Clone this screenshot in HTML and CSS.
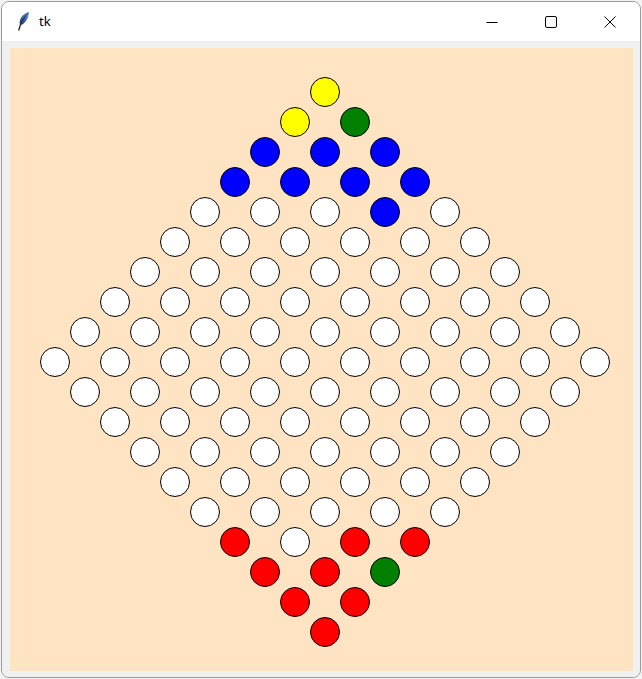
FILE: index.html
```html
<!DOCTYPE html>
<html>
<head>
<meta charset="utf-8">
<title>tk</title>
<link rel="stylesheet" href="styles.css">
</head>
<body>
<div class="window">
  <div class="titlebar">
    <div class="title">
      <svg class="feather" width="13" height="20" viewBox="0 0 13 20">
        <defs>
          <linearGradient id="fg" x1="0" y1="1" x2="1" y2="0">
            <stop offset="0" stop-color="#1d3560"/>
            <stop offset="0.6" stop-color="#3f6fb0"/>
            <stop offset="1" stop-color="#8fb2e0"/>
          </linearGradient>
        </defs>
        <path d="M1.6 19.5 L3.6 13.5" stroke="#222" stroke-width="1.3" fill="none"/>
        <path d="M3.2 14.5 C1.4 10 4 3.5 11.8 0.8 C12.4 6 8.8 12.5 3.2 14.5 Z" fill="url(#fg)"/>
        <path d="M3.6 13.6 C5.4 9.5 8.2 5 11.2 1.8" stroke="#14233f" stroke-width="0.8" fill="none"/>
      </svg>
      <span class="title-text">tk</span>
    </div>
    <div class="controls">
      <div class="ctl"><svg width="12" height="12" viewBox="0 0 12 12"><path d="M0.5 6.5 H11.5" stroke="#000" stroke-width="1"/></svg></div>
      <div class="ctl"><svg width="12" height="12" viewBox="0 0 12 12"><rect x="0.5" y="0.5" width="11" height="11" rx="1.5" fill="none" stroke="#000" stroke-width="1"/></svg></div>
      <div class="ctl"><svg width="12" height="12" viewBox="0 0 12 12"><path d="M0.5 0.5 L11.5 11.5 M11.5 0.5 L0.5 11.5" stroke="#000" stroke-width="1"/></svg></div>
    </div>
  </div>
  <div class="client">
    <div class="canvas">
      <svg class="board" width="623" height="623" viewBox="10 48 623 623">
        <g class="row"><circle class="y" cx="325" cy="92" r="14.5"/></g>
        <g class="row"><circle class="y" cx="295" cy="122" r="14.5"/><circle class="g" cx="355" cy="122" r="14.5"/></g>
        <g class="row"><circle class="b" cx="265" cy="152" r="14.5"/><circle class="b" cx="325" cy="152" r="14.5"/><circle class="b" cx="385" cy="152" r="14.5"/></g>
        <g class="row"><circle class="b" cx="235" cy="182" r="14.5"/><circle class="b" cx="295" cy="182" r="14.5"/><circle class="b" cx="355" cy="182" r="14.5"/><circle class="b" cx="415" cy="182" r="14.5"/></g>
        <g class="row"><circle class="w" cx="205" cy="212" r="14.5"/><circle class="w" cx="265" cy="212" r="14.5"/><circle class="w" cx="325" cy="212" r="14.5"/><circle class="b" cx="385" cy="212" r="14.5"/><circle class="w" cx="445" cy="212" r="14.5"/></g>
        <g class="row"><circle class="w" cx="175" cy="242" r="14.5"/><circle class="w" cx="235" cy="242" r="14.5"/><circle class="w" cx="295" cy="242" r="14.5"/><circle class="w" cx="355" cy="242" r="14.5"/><circle class="w" cx="415" cy="242" r="14.5"/><circle class="w" cx="475" cy="242" r="14.5"/></g>
        <g class="row"><circle class="w" cx="145" cy="272" r="14.5"/><circle class="w" cx="205" cy="272" r="14.5"/><circle class="w" cx="265" cy="272" r="14.5"/><circle class="w" cx="325" cy="272" r="14.5"/><circle class="w" cx="385" cy="272" r="14.5"/><circle class="w" cx="445" cy="272" r="14.5"/><circle class="w" cx="505" cy="272" r="14.5"/></g>
        <g class="row"><circle class="w" cx="115" cy="302" r="14.5"/><circle class="w" cx="175" cy="302" r="14.5"/><circle class="w" cx="235" cy="302" r="14.5"/><circle class="w" cx="295" cy="302" r="14.5"/><circle class="w" cx="355" cy="302" r="14.5"/><circle class="w" cx="415" cy="302" r="14.5"/><circle class="w" cx="475" cy="302" r="14.5"/><circle class="w" cx="535" cy="302" r="14.5"/></g>
        <g class="row"><circle class="w" cx="85" cy="332" r="14.5"/><circle class="w" cx="145" cy="332" r="14.5"/><circle class="w" cx="205" cy="332" r="14.5"/><circle class="w" cx="265" cy="332" r="14.5"/><circle class="w" cx="325" cy="332" r="14.5"/><circle class="w" cx="385" cy="332" r="14.5"/><circle class="w" cx="445" cy="332" r="14.5"/><circle class="w" cx="505" cy="332" r="14.5"/><circle class="w" cx="565" cy="332" r="14.5"/></g>
        <g class="row"><circle class="w" cx="55" cy="362" r="14.5"/><circle class="w" cx="115" cy="362" r="14.5"/><circle class="w" cx="175" cy="362" r="14.5"/><circle class="w" cx="235" cy="362" r="14.5"/><circle class="w" cx="295" cy="362" r="14.5"/><circle class="w" cx="355" cy="362" r="14.5"/><circle class="w" cx="415" cy="362" r="14.5"/><circle class="w" cx="475" cy="362" r="14.5"/><circle class="w" cx="535" cy="362" r="14.5"/><circle class="w" cx="595" cy="362" r="14.5"/></g>
        <g class="row"><circle class="w" cx="85" cy="392" r="14.5"/><circle class="w" cx="145" cy="392" r="14.5"/><circle class="w" cx="205" cy="392" r="14.5"/><circle class="w" cx="265" cy="392" r="14.5"/><circle class="w" cx="325" cy="392" r="14.5"/><circle class="w" cx="385" cy="392" r="14.5"/><circle class="w" cx="445" cy="392" r="14.5"/><circle class="w" cx="505" cy="392" r="14.5"/><circle class="w" cx="565" cy="392" r="14.5"/></g>
        <g class="row"><circle class="w" cx="115" cy="422" r="14.5"/><circle class="w" cx="175" cy="422" r="14.5"/><circle class="w" cx="235" cy="422" r="14.5"/><circle class="w" cx="295" cy="422" r="14.5"/><circle class="w" cx="355" cy="422" r="14.5"/><circle class="w" cx="415" cy="422" r="14.5"/><circle class="w" cx="475" cy="422" r="14.5"/><circle class="w" cx="535" cy="422" r="14.5"/></g>
        <g class="row"><circle class="w" cx="145" cy="452" r="14.5"/><circle class="w" cx="205" cy="452" r="14.5"/><circle class="w" cx="265" cy="452" r="14.5"/><circle class="w" cx="325" cy="452" r="14.5"/><circle class="w" cx="385" cy="452" r="14.5"/><circle class="w" cx="445" cy="452" r="14.5"/><circle class="w" cx="505" cy="452" r="14.5"/></g>
        <g class="row"><circle class="w" cx="175" cy="482" r="14.5"/><circle class="w" cx="235" cy="482" r="14.5"/><circle class="w" cx="295" cy="482" r="14.5"/><circle class="w" cx="355" cy="482" r="14.5"/><circle class="w" cx="415" cy="482" r="14.5"/><circle class="w" cx="475" cy="482" r="14.5"/></g>
        <g class="row"><circle class="w" cx="205" cy="512" r="14.5"/><circle class="w" cx="265" cy="512" r="14.5"/><circle class="w" cx="325" cy="512" r="14.5"/><circle class="w" cx="385" cy="512" r="14.5"/><circle class="w" cx="445" cy="512" r="14.5"/></g>
        <g class="row"><circle class="r" cx="235" cy="542" r="14.5"/><circle class="w" cx="295" cy="542" r="14.5"/><circle class="r" cx="355" cy="542" r="14.5"/><circle class="r" cx="415" cy="542" r="14.5"/></g>
        <g class="row"><circle class="r" cx="265" cy="572" r="14.5"/><circle class="r" cx="325" cy="572" r="14.5"/><circle class="g" cx="385" cy="572" r="14.5"/></g>
        <g class="row"><circle class="r" cx="295" cy="602" r="14.5"/><circle class="r" cx="355" cy="602" r="14.5"/></g>
        <g class="row"><circle class="r" cx="325" cy="632" r="14.5"/></g>
      </svg>
    </div>
  </div>
</div>
</body>
</html>
```
FILE: styles.css
```css
html, body {
  margin: 0;
  padding: 0;
  background: #f3f3f3;
  overflow: hidden;
}

.window {
  margin: 1px 0 0 1px;
  width: 640px;
  height: 677px;
  box-sizing: border-box;
  border: 1px solid #9a9a9a;
  border-radius: 8px;
  overflow: hidden;
  display: flex;
  flex-direction: column;
  background: #f0f0f0;
}

.titlebar {
  height: 39px;
  flex: none;
  background: #ffffff;
  display: flex;
  align-items: center;
  justify-content: space-between;
}

.title {
  display: flex;
  align-items: center;
  padding-left: 15px;
  gap: 9px;
}

.feather {
  display: block;
  margin-top: -1px;
}

.title-text {
  font-family: "Noto Sans", "Open Sans", sans-serif;
  font-size: 13px;
  color: #000;
  line-height: 16px;
  margin-top: -2px;
}

.controls {
  display: flex;
  height: 100%;
  padding-right: 1px;
}

.ctl {
  width: 59px;
  display: flex;
  align-items: center;
  justify-content: center;
  margin-top: 0;
}

.ctl svg {
  display: block;
}

.client {
  flex: 1;
  padding: 7px 0 0 8px;
  background: #f0f0f0;
}

.canvas {
  width: 623px;
  height: 623px;
  background: #ffe4c4;
}

.board {
  display: block;
}

.board circle {
  stroke: #000;
  stroke-width: 1;
}

.w { fill: #ffffff; }
.y { fill: #ffff00; }
.g { fill: #008000; }
.b { fill: #0000ff; }
.r { fill: #ff0000; }
```
